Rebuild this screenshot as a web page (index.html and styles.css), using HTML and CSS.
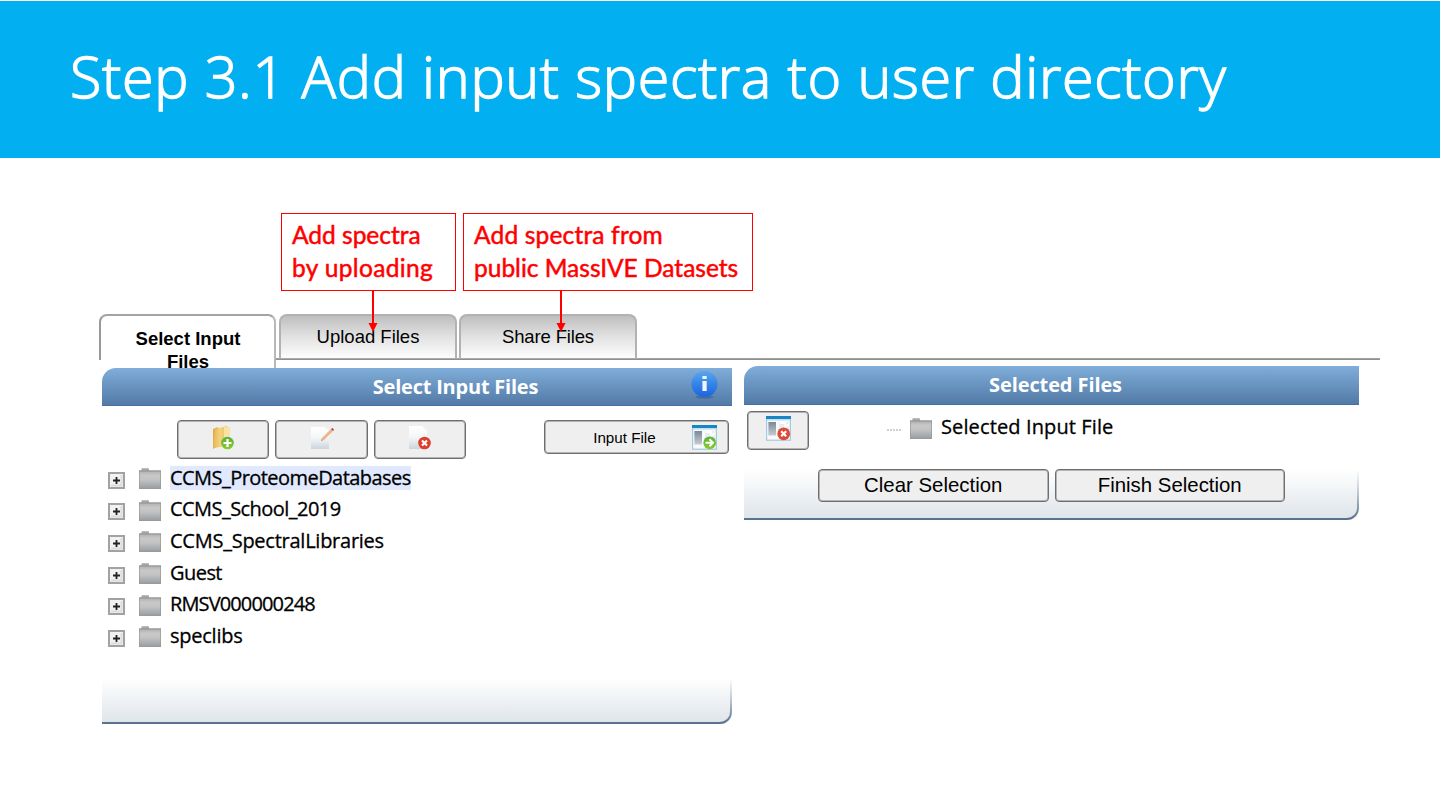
FILE: index.html
```html
<!DOCTYPE html>
<html lang="en">
<head>
<meta charset="utf-8">
<title>Step 3.1 Add input spectra to user directory</title>
<link rel="stylesheet" href="styles.css">
</head>
<body>
<svg class="defs" width="0" height="0" aria-hidden="true">
  <defs>
    <linearGradient id="gFolder" x1="0" y1="0" x2="0" y2="1"><stop offset="0" stop-color="#a2a2a2"/><stop offset=".35" stop-color="#c8c8c8"/><stop offset=".55" stop-color="#c2c3c4"/><stop offset="1" stop-color="#989a9c"/></linearGradient>
    <linearGradient id="gGreen" x1="0" y1="0" x2="0" y2="1"><stop offset="0" stop-color="#58b03c"/><stop offset="1" stop-color="#8ccb2c"/></linearGradient>
    <linearGradient id="gYellow" x1="0" y1="0" x2="1" y2="0"><stop offset="0" stop-color="#e3b74e"/><stop offset=".5" stop-color="#f3d27c"/><stop offset="1" stop-color="#e8c263"/></linearGradient>
    <linearGradient id="gPaper" x1="0" y1="0" x2="0" y2="1"><stop offset="0" stop-color="#ffffff"/><stop offset=".5" stop-color="#f3f6f8"/><stop offset="1" stop-color="#ccd5dc"/></linearGradient>
    <linearGradient id="gInfo" x1="0" y1="0" x2="0" y2="1"><stop offset="0" stop-color="#5ba6ee"/><stop offset=".5" stop-color="#3484e8"/><stop offset="1" stop-color="#1e63de"/></linearGradient>
    <linearGradient id="gPane" x1="0" y1="0" x2="0" y2="1"><stop offset="0" stop-color="#7c8894"/><stop offset="1" stop-color="#c5cdd4"/></linearGradient>
    <symbol id="folder" viewBox="0 0 22 21">
      <path d="M0 2.6h2.4V1q0-.8.8-.8h6q.8 0 .8.8v1.6h12V21H0z" fill="url(#gFolder)"/>
      <path d="M0 3h22" stroke="#8f8f8f"/><path d="M.4 3v17.6h21.2V3" fill="none" stroke="#98999a" stroke-width=".8"/>
    </symbol>
    <symbol id="plus" viewBox="0 0 17 17">
      <rect x="1" y="1" width="15" height="15" fill="#f2f2f2" stroke="#a2a2a2" stroke-width="2"/>
      <path d="M13.5 3v10.5H3" fill="none" stroke="#dcdcdc" stroke-width="2"/>
      <path d="M8.5 5v7M5 8.5h7" stroke="#222" stroke-width="1.8"/>
    </symbol>
    <symbol id="window" viewBox="0 0 25 25">
      <rect x=".6" y=".6" width="23.8" height="23.6" fill="#f8fafb" stroke="#a3cae2" stroke-width="1.2"/>
      <path d="M0 0h25v3H0z" fill="#1985c5"/><path d="M1 3h23v1.6H1z" fill="#bfe0f2"/>
      <rect x="2.4" y="6" width="7.6" height="13.5" fill="url(#gPane)"/>
      <path d="M13 6h10v12H13z" fill="#e9edef"/><path d="M14 7h5v4l4-3" fill="none" stroke="#fff" stroke-width="2"/>
    </symbol>
  </defs>
</svg>

<header class="banner"><h1 class="banner-title">Step 3.1 Add input spectra to user directory</h1></header>

<main class="stage">
  <nav class="tabs">
    <div class="tab tab-active">Select Input<br>Files</div>
    <div class="tab">Upload Files</div>
    <div class="tab tab-share">Share Files</div>
  </nav>

  <div class="panels">
    <section class="panel panel-files">
      <h2 class="panel-head">Select Input Files
        <svg class="info" width="27" height="31" viewBox="0 0 27 31"><ellipse cx="13.5" cy="27" rx="9" ry="1.8" fill="#3c5f8e" opacity=".6"/><circle cx="13.5" cy="14" r="13" fill="url(#gInfo)"/><path d="M11.4 6h4.3v3h-4.3zM11.4 11h4.3v10h-4.3z" fill="#eef5ff"/></svg>
      </h2>
      <div class="toolbar">
        <button class="btn tool"><svg width="22" height="24" viewBox="0 0 22 24"><path d="M1 3l5-2v19l-5 3z" fill="#e2ad46"/><path d="M3 3l12-3v20L1 22z" fill="url(#gYellow)"/><path d="M12 1h6v13l-6 4z" fill="#f8e3a4"/><circle cx="15.5" cy="17" r="6.3" fill="url(#gGreen)"/><path d="M15.5 13v8M11.5 17h8" stroke="#fff" stroke-width="2.2"/></svg></button>
        <button class="btn tool"><svg width="24" height="24" viewBox="0 0 24 24"><path d="M1 1h13l5 4v18H1z" fill="url(#gPaper)"/><path d="M11 15l1-3L21 3l2 2-9 9z" fill="#efb48a"/><path d="M21 3l1.5-1L24 3.7 23 5z" fill="#a43c46"/><path d="M11 15l.5-2 1.2 1.2z" fill="#999"/></svg></button>
        <button class="btn tool"><svg width="22" height="24" viewBox="0 0 22 24"><path d="M0 0h13l5 5v18H0z" fill="url(#gPaper)"/><circle cx="15.5" cy="17" r="6.3" fill="#de3e2c"/><path d="M13 14.5l5 5M18 14.5l-5 5" stroke="#fff" stroke-width="2.2"/></svg></button>
        <button class="btn input-file">Input File
          <svg width="25" height="25" viewBox="0 0 25 25"><use href="#window" width="25" height="25"/><circle cx="17.7" cy="17.8" r="6.4" fill="url(#gGreen)"/><path d="M13.5 17.8h7M17.5 14.3l3.5 3.5-3.5 3.5" fill="none" stroke="#fff" stroke-width="2"/></svg></button>
      </div>
      <ul class="tree">
        <li><svg class="plus"><use href="#plus"/></svg><svg class="folder"><use href="#folder"/></svg><span class="label label-on tight">CCMS_ProteomeDatabases</span></li>
        <li><svg class="plus"><use href="#plus"/></svg><svg class="folder"><use href="#folder"/></svg><span class="label tight">CCMS_School_2019</span></li>
        <li><svg class="plus"><use href="#plus"/></svg><svg class="folder"><use href="#folder"/></svg><span class="label snug">CCMS_SpectralLibraries</span></li>
        <li><svg class="plus"><use href="#plus"/></svg><svg class="folder"><use href="#folder"/></svg><span class="label tight">Guest</span></li>
        <li><svg class="plus"><use href="#plus"/></svg><svg class="folder"><use href="#folder"/></svg><span class="label numeric">RMSV000000248</span></li>
        <li><svg class="plus"><use href="#plus"/></svg><svg class="folder"><use href="#folder"/></svg><span class="label snug">speclibs</span></li>
      </ul>
      <div class="panel-foot"></div>
    </section>

    <section class="panel panel-selected">
      <h2 class="panel-head">Selected Files</h2>
      <div class="selection">
        <button class="btn remove"><svg width="25" height="25" viewBox="0 0 25 25"><use href="#window" width="25" height="25"/><circle cx="17.7" cy="17.8" r="6.4" fill="#dc4a38"/><path d="M15.2 15.3l5 5M20.2 15.3l-5 5" stroke="#fff" stroke-width="2.2"/></svg></button>
        <span class="dots"></span>
        <svg class="folder"><use href="#folder"/></svg>
        <span class="label">Selected Input File</span>
      </div>
      <div class="panel-foot actions">
        <button class="btn action">Clear Selection</button>
        <button class="btn action">Finish Selection</button>
      </div>
    </section>
  </div>
</main>

<aside class="callout callout-upload">Add spectra<br><span class="wide">by uploading</span></aside>
<aside class="callout callout-share"><span class="roomy">Add spectra from</span><br>public MassIVE Datasets</aside>
<svg class="arrow arrow-upload" width="10" height="41" viewBox="0 0 10 41"><path d="M5 0v34" stroke="red" stroke-width="2"/><path d="M.5 32h9L5 41z" fill="red"/></svg>
<svg class="arrow arrow-share" width="10" height="41" viewBox="0 0 10 41"><path d="M5 0v34" stroke="red" stroke-width="2"/><path d="M.5 32h9L5 41z" fill="red"/></svg>
</body>
</html>
```
FILE: styles.css
```css
* { box-sizing: border-box; }
body { margin: 0; width: 1440px; height: 810px; overflow: hidden; background: #fff; color: #000; font-family: "Open Sans", sans-serif; }
.defs { position: absolute; }

.banner { margin-top: 1px; height: 157px; padding: 34px 0 0 70px; background: #02b0f2; }
.banner-title { margin: 0; font: 300 57.5px/82px "Open Sans", sans-serif; letter-spacing: .66px; color: #fff; white-space: nowrap; -webkit-text-stroke: 1.4px #fff; }

.stage { padding: 157px 0 0 99px; margin-top: -1px; }
.tabs { display: flex; align-items: flex-start; gap: 2px; width: 1281px; height: 46px; background: linear-gradient(#aaa, #888) 176px 44px / 1105px 2px no-repeat; }
.tab { width: 178px; height: 45px; padding-top: 9px; border: 2px solid #b2b2b2; border-bottom: 1px solid #aaa; border-radius: 8px 8px 0 0; background: linear-gradient(#bfbfbf, #e2e2e2 50%, #fdfdfd); text-align: center; font: 18.5px/24px "Liberation Sans", sans-serif; }
.tab-share { letter-spacing: -.15px; }
.tab-active { position: relative; width: 177px; height: 46px; margin-right: 1px; padding: 11px 0 0 1px; border-color: #a4a4a4 #b8b8b8 #b8b8b8 #999; border-bottom: 0; background: #fff; font-weight: 700; line-height: 23px; }
/* continues the right edge of the open tab below the tab line */
.tab-active::after { content: ""; position: absolute; right: -2px; top: 44px; width: 2px; height: 8px; background: #b8b8b8; }

.panels { position: relative; display: flex; align-items: flex-start; gap: 12px; padding-left: 3px; margin-top: 6px; }
.panel { display: flex; flex-direction: column; }
.panel-files { width: 630px; height: 356px; margin-top: 2px; }
.panel-selected { width: 615px; height: 154px; }
.panel-head { position: relative; height: 38px; margin: 0; padding-left: 77px; border-radius: 14px 0 0 0; background: linear-gradient(#80add9, #527aa7); border-bottom: 1px solid #476f9f; color: #fff; text-align: center; font: 700 20px/37px "Open Sans", sans-serif; letter-spacing: -.22px; }
.panel-selected .panel-head { height: 39px; padding-left: 8px; letter-spacing: -.1px; }
.info { position: absolute; right: 14px; top: 2px; }

.btn { display: flex; align-items: center; justify-content: center; padding: 0; border: 1px solid #6e6e6e; border-radius: 4px; background: #efefef; box-shadow: inset 0 0 0 1px #b4b4b4; color: #000; font-family: "Liberation Sans", sans-serif; }
.toolbar { display: flex; gap: 6px; height: 42px; margin-top: 14px; padding-left: 75px; }
.tool { width: 92.4px; height: 39px; padding-bottom: 4px; }
.input-file { width: 185px; height: 34px; margin-left: 72px; padding-left: 48px; gap: 36px; font-size: 15.2px; justify-content: flex-start; }

.tree { margin: 0; padding: 0 0 0 6px; list-style: none; }
.tree li { display: flex; align-items: center; height: 31.6px; }
.plus { width: 17px; height: 17px; margin: 5px 14px 0 0; }
.folder { width: 22px; height: 21px; margin: 2px 9px 0 0; }
.label { height: 24px; font-size: 20px; line-height: 24px; white-space: nowrap; -webkit-text-stroke: .3px #000; }
.label-on { width: 241px; background: #e0e9fd; }
.tight { letter-spacing: -.55px; }
.snug { letter-spacing: -.25px; }
.numeric { letter-spacing: -.87px; }

.panel-foot { margin-top: auto; height: 46px; border: solid transparent; border-width: 0 2px 2px 0; border-radius: 0 0 12px 0; background: linear-gradient(#fff, #dfe5ea) padding-box, linear-gradient(#fff, #b9c5cf 50%, #55708a) border-box; }

.selection { display: flex; align-items: center; height: 38px; margin: 6px 0 0 3px; }
.remove { width: 62px; height: 39px; padding-bottom: 4px; }
.dots { width: 15px; height: 2px; margin: 0 8px 0 78px; background: repeating-linear-gradient(90deg, #d0d0d0 0 2px, #fff 2px 3px); }
.selection .folder { margin-top: -3px; }
.selection .label { margin-top: -6px; letter-spacing: .12px; }
.actions { display: flex; gap: 6px; height: 51px; padding-left: 74px; }
.action { width: 230.5px; height: 33px; padding-bottom: 0; font-size: 20.4px; }

.callout { position: absolute; top: 213px; height: 78px; padding: 4px 0 0 10px; border: 1px solid red; background: #fff; color: red; font: 400 24.5px/33px Lato, sans-serif; white-space: nowrap; -webkit-text-stroke: .5px red; }
.wide { letter-spacing: .35px; }
.roomy { letter-spacing: .18px; }
.callout-upload { left: 281px; width: 175px; }
.callout-share { left: 463px; width: 290px; }
.arrow { position: absolute; top: 291px; }
.arrow-upload { left: 368px; }
.arrow-share { left: 556px; }
```
